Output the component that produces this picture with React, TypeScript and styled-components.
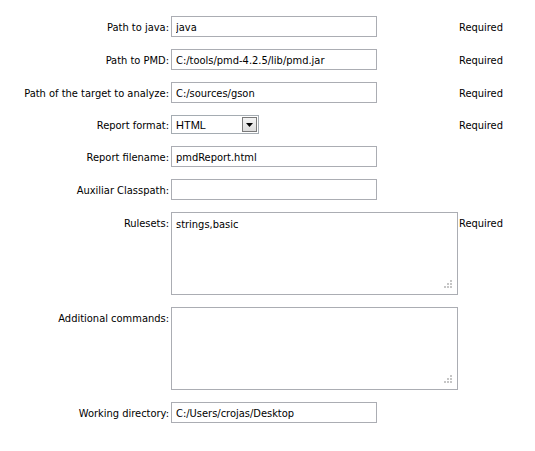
import React from 'react';
import styled, { createGlobalStyle } from 'styled-components';

const Global = createGlobalStyle`
  body {
    margin: 0;
    background: #ffffff;
    font-family: "DejaVu Sans Condensed", "DejaVu Sans", sans-serif;
    font-size: 11px;
    color: #000000;
  }
`;

const Form = styled.form`
  display: grid;
  grid-template-columns: 163px 287px auto;
  row-gap: 12px;
  padding: 16px 0 0 8px;
`;

const Label = styled.label<{ $top?: boolean }>`
  display: flex;
  justify-content: flex-end;
  align-items: ${(p) => (p.$top ? 'flex-start' : 'center')};
  padding-right: 2px;
  padding-top: ${(p) => (p.$top ? '5px' : '1px')};
  white-space: nowrap;
`;

const Field = styled.div`
  display: flex;
  align-items: center;
`;

const Note = styled.div<{ $top?: boolean }>`
  display: flex;
  align-items: ${(p) => (p.$top ? 'flex-start' : 'center')};
  padding-top: ${(p) => (p.$top ? '5px' : '1px')};
  padding-left: 1px;
`;

const TextInput = styled.input`
  box-sizing: border-box;
  width: 206px;
  height: 21px;
  border: 1px solid #abadb3;
  padding: 1px 4px 0;
  margin: 0;
  font: inherit;
  color: #000;
  outline: none;
`;

const AreaWrap = styled.div`
  position: relative;
  width: 287px;
  height: 83px;
`;

const TextArea = styled.textarea`
  box-sizing: border-box;
  width: 100%;
  height: 100%;
  border: 1px solid #abadb3;
  padding: 5px 4px;
  margin: 0;
  font: inherit;
  line-height: 13px;
  resize: none;
  outline: none;
  display: block;
`;

const Grip = styled.svg`
  position: absolute;
  right: 6px;
  bottom: 6px;
  pointer-events: none;
`;

const SelectWrap = styled.div`
  position: relative;
  width: 88px;
  height: 19px;
`;

const Select = styled.select`
  appearance: none;
  box-sizing: border-box;
  width: 100%;
  height: 100%;
  border: 1px solid #a5acb2;
  background: #fff;
  padding: 0 0 0 4px;
  margin: 0;
  font-family: "Liberation Sans", Arial, sans-serif;
  font-size: 11px;
  color: #000;
  outline: none;
  border-radius: 0;
`;

const Arrow = styled.div`
  position: absolute;
  top: 2px;
  right: 2px;
  width: 15px;
  height: 15px;
  box-sizing: border-box;
  border: 1px solid #7a7a7a;
  background: linear-gradient(#f4f4f4, #dcdcdc);
  display: flex;
  align-items: center;
  justify-content: center;
  pointer-events: none;
`;

const ResizeGrip = () => (
  <Grip width="9" height="9" viewBox="0 0 9 9">
    {[
      [7, 0],
      [4, 3],
      [7, 3],
      [1, 6],
      [4, 6],
      [7, 6],
    ].map(([x, y]) => (
      <rect key={`${x}-${y}`} x={x} y={y} width="2" height="2" fill="#c6c6c6" />
    ))}
  </Grip>
);

const rows = [
  { label: 'Path to java:', value: 'java', required: true },
  { label: 'Path to PMD:', value: 'C:/tools/pmd-4.2.5/lib/pmd.jar', required: true },
  { label: 'Path of the target to analyze:', value: 'C:/sources/gson', required: true },
];

export default function App() {
  return (
    <>
      <Global />
      <Form onSubmit={(e) => e.preventDefault()}>
        {rows.map((r) => (
          <React.Fragment key={r.label}>
            <Label>{r.label}</Label>
            <Field>
              <TextInput type="text" defaultValue={r.value} />
            </Field>
            <Note>{r.required ? 'Required' : ''}</Note>
          </React.Fragment>
        ))}

        <Label>Report format:</Label>
        <Field>
          <SelectWrap>
            <Select defaultValue="HTML">
              <option>HTML</option>
              <option>XML</option>
              <option>Text</option>
            </Select>
            <Arrow>
              <svg width="7" height="4" viewBox="0 0 7 4">
                <path d="M0 0h7L3.5 4z" fill="#000" />
              </svg>
            </Arrow>
          </SelectWrap>
        </Field>
        <Note>Required</Note>

        <Label>Report filename:</Label>
        <Field>
          <TextInput type="text" defaultValue="pmdReport.html" />
        </Field>
        <Note />

        <Label>Auxiliar Classpath:</Label>
        <Field>
          <TextInput type="text" defaultValue="" />
        </Field>
        <Note />

        <Label $top>Rulesets:</Label>
        <Field>
          <AreaWrap>
            <TextArea defaultValue="strings,basic" />
            <ResizeGrip />
          </AreaWrap>
        </Field>
        <Note $top>Required</Note>

        <Label $top>Additional commands:</Label>
        <Field>
          <AreaWrap>
            <TextArea defaultValue="" />
            <ResizeGrip />
          </AreaWrap>
        </Field>
        <Note />

        <Label>Working directory:</Label>
        <Field>
          <TextInput type="text" defaultValue="C:/Users/crojas/Desktop" />
        </Field>
        <Note />
      </Form>
    </>
  );
}
